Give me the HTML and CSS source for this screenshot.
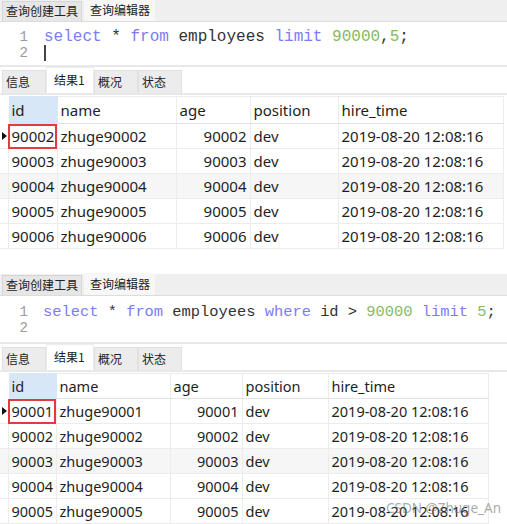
FILE: index.html
```html
<!DOCTYPE html>
<html lang="zh">
<head>
<meta charset="utf-8">
<title>Query</title>
<link rel="stylesheet" href="styles.css">
</head>
<body>
<div class="panel p1">
  <div class="tabbar">
    <span class="tab">查询创建工具</span><span class="tab active">查询编辑器</span>
  </div>
  <div class="editor">
    <div class="gutter"><div class="ln">1</div><div class="ln">2</div></div>
    <div class="code">
      <div class="line"><span class="kw">select</span> * <span class="kw">from</span> employees <span class="kw">limit</span> <span class="num">90000</span>,<span class="num">5</span>;</div>
      <div class="line"><span class="caret"></span></div>
    </div>
  </div>
  <div class="rtabs">
    <span class="rtab">信息</span><span class="rtab active">结果1</span><span class="rtab">概况</span><span class="rtab">状态</span>
  </div>
  <table class="grid">
    <colgroup><col class="c0"><col class="c1"><col class="c2"><col class="c3"><col class="c4"><col class="c5"></colgroup>
    <thead><tr><th class="ind"></th><th class="sel">id</th><th>name</th><th>age</th><th>position</th><th>hire_time</th></tr></thead>
    <tbody>
      <tr><td class="ind"><span class="ptr"></span></td><td class="mark">90002</td><td>zhuge90002</td><td class="r">90002</td><td>dev</td><td>2019-08-20 12:08:16</td></tr>
      <tr><td class="ind"></td><td>90003</td><td>zhuge90003</td><td class="r">90003</td><td>dev</td><td>2019-08-20 12:08:16</td></tr>
      <tr><td class="ind"></td><td>90004</td><td>zhuge90004</td><td class="r">90004</td><td>dev</td><td>2019-08-20 12:08:16</td></tr>
      <tr><td class="ind"></td><td>90005</td><td>zhuge90005</td><td class="r">90005</td><td>dev</td><td>2019-08-20 12:08:16</td></tr>
      <tr><td class="ind"></td><td>90006</td><td>zhuge90006</td><td class="r">90006</td><td>dev</td><td>2019-08-20 12:08:16</td></tr>
    </tbody>
  </table>
</div>

<div class="panel p2">
  <div class="tabbar">
    <span class="tab">查询创建工具</span><span class="tab active">查询编辑器</span>
  </div>
  <div class="editor">
    <div class="gutter"><div class="ln">1</div><div class="ln">2</div></div>
    <div class="code">
      <div class="line"><span class="kw">select</span> * <span class="kw">from</span> employees <span class="kw">where</span> id &gt; <span class="num">90000</span> <span class="kw">limit</span> <span class="num">5</span>;</div>
      <div class="line">&nbsp;</div>
    </div>
  </div>
  <div class="rtabs">
    <span class="rtab">信息</span><span class="rtab active">结果1</span><span class="rtab">概况</span><span class="rtab">状态</span>
  </div>
  <table class="grid">
    <colgroup><col class="c0"><col class="c1"><col class="c2"><col class="c3"><col class="c4"><col class="c5"></colgroup>
    <thead><tr><th class="ind"></th><th class="sel">id</th><th>name</th><th>age</th><th>position</th><th>hire_time</th></tr></thead>
    <tbody>
      <tr><td class="ind"><span class="ptr"></span></td><td class="mark">90001</td><td>zhuge90001</td><td class="r">90001</td><td>dev</td><td>2019-08-20 12:08:16</td></tr>
      <tr><td class="ind"></td><td>90002</td><td>zhuge90002</td><td class="r">90002</td><td>dev</td><td>2019-08-20 12:08:16</td></tr>
      <tr><td class="ind"></td><td>90003</td><td>zhuge90003</td><td class="r">90003</td><td>dev</td><td>2019-08-20 12:08:16</td></tr>
      <tr><td class="ind"></td><td>90004</td><td>zhuge90004</td><td class="r">90004</td><td>dev</td><td>2019-08-20 12:08:16</td></tr>
      <tr><td class="ind"></td><td>90005</td><td>zhuge90005</td><td class="r">90005</td><td>dev</td><td>2019-08-20 12:08:16</td></tr>
    </tbody>
  </table>
  <span class="watermark">CSDN @Zhuge_An</span>
</div>
</body>
</html>
```

FILE: styles.css
```css
* { box-sizing: border-box; }
html, body { margin: 0; padding: 0; background: #fff; }
body {
  width: 507px;
  height: 524px;
  overflow: hidden;
  font-family: "Noto Sans", "Noto Sans CJK SC", sans-serif;
  color: #222;
}

.panel { position: relative; }
.p2 { margin-top: 25px; }

.tabbar {
  height: 22px;
  background: #efefef;
  border-bottom: 1px solid #dcdcdc;
  display: flex;
  align-items: flex-end;
  padding-left: 2px;
  gap: 2px;
}
.tab {
  font-family: "Noto Sans CJK SC", sans-serif;
  font-size: 12px;
  line-height: 18px;
  height: 20px;
  padding: 0 3px;
  background: #e6e6e6;
  border: 1px solid #d6d6d6;
  border-bottom: none;
  color: #222;
}
.tab.active {
  background: #f7f7f7;
  border-color: #f7f7f7;
  height: 22px;
  line-height: 20px;
  padding: 0 4px 0 5px;
}

.editor {
  display: flex;
  height: 45px;
  background: #fff;
  border-bottom: 2px solid #e8e8e8;
  padding-top: 7px;
  overflow: hidden;
}
.gutter {
  width: 40px;
  flex: none;
  font-family: "Liberation Mono", monospace;
  color: #9a9a9a;
  text-align: right;
  padding-right: 12px;
}
.ln { height: 16px; line-height: 16px; font-size: 14px; }
.code {
  font-family: "Liberation Mono", monospace;
  color: #333;
  padding-left: 4px;
}
.line { white-space: pre; height: 16px; line-height: 16px; }
.p1 .code { font-size: 16px; }
.p2 .editor { height: 48px; padding-top: 8px; }
.p2 .code { font-size: 15.4px; padding-left: 3px; }
.kw { color: #7c7cf4; }
.num { color: #86bb5c; }
.caret {
  display: inline-block;
  width: 1.5px;
  height: 16px;
  background: #444;
  vertical-align: top;
}

.rtabs {
  height: 28px;
  display: flex;
  align-items: flex-end;
  padding-left: 2px;
  background: #fff;
  border-bottom: 2px solid #e8e8e8;
}
.rtab {
  font-family: "Noto Sans CJK SC", sans-serif;
  font-size: 12px;
  height: 23px;
  line-height: 22px;
  width: 44px;
  padding-left: 3px;
  background: #ececec;
  border: 1px solid #e0e0e0;
  border-bottom: none;
  color: #222;
}
.rtab.active {
  background: #fff;
  height: 26px;
  line-height: 24px;
  width: 48px;
  padding-left: 7px;
  border-color: #ececec;
}

.grid {
  border-collapse: collapse;
  table-layout: fixed;
  margin-top: 1px;
}
.p1 .grid { width: 503px; font-size: 15px; }
.p1 .c0 { width: 8px; }
.p1 .c1 { width: 49px; }
.p1 .c2 { width: 119px; }
.p1 .c3 { width: 74px; }
.p1 .c4 { width: 88px; }
.p1 .c5 { width: 165px; }

.p2 .grid { width: 488px; font-size: 14.5px; }
.p2 .c0 { width: 8px; }
.p2 .c1 { width: 48px; }
.p2 .c2 { width: 114px; }
.p2 .c3 { width: 72px; }
.p2 .c4 { width: 86px; }
.p2 .c5 { width: 160px; }

.grid th, .grid td {
  padding: 0 3px;
  white-space: nowrap;
  overflow: hidden;
  text-align: left;
  font-weight: normal;
  border: 1px solid #ececec;
  color: #1e1e1e;
}
.grid th {
  height: 27px;
  border-bottom: 1px solid #e2e2e2;
  background: #fff;
}
.p2 .grid th { height: 25px; }
.grid th.sel { background: #d7e7f7; border-color: #d7e7f7; }
.grid td { height: 25px; }
.grid td.r { text-align: right; }
.grid tbody tr:nth-child(3) td { background: #f6f6f6; }
.grid .ind { padding: 0; border-left: none; }
.grid th.ind { border-color: #fff; }
.grid td.mark { outline: 2px solid #e33b3b; outline-offset: -2px; }
.ptr {
  display: block;
  width: 0; height: 0;
  margin-left: 2px;
  border-top: 4px solid transparent;
  border-bottom: 4px solid transparent;
  border-left: 5px solid #111;
}

.watermark {
  position: absolute;
  right: 6px;
  bottom: 7px;
  font-family: "Noto Sans", sans-serif;
  font-size: 13.5px;
  white-space: nowrap;
  color: rgba(110, 110, 110, 0.6);
}
```
